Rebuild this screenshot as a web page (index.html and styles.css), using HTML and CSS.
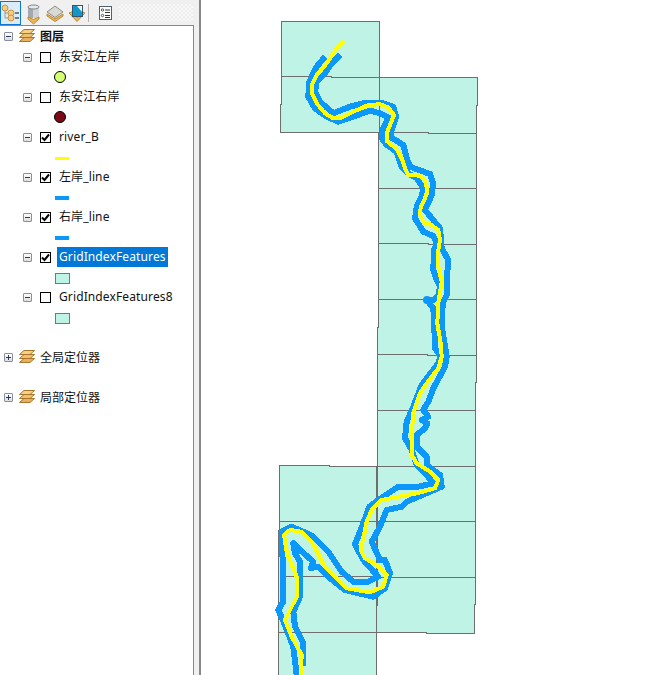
FILE: index.html
```html
<!DOCTYPE html>
<html lang="zh-CN">

<head>
    <meta charset="UTF-8">
    <meta name="viewport" content="width=device-width, initial-scale=1.0">
    <title>图层</title>

    <link rel="stylesheet" href="styles.css">
</head>

<body>
    <svg class="defs" width="0" height="0">
        <symbol id="stack" viewBox="0 0 16 14">
            <path d="M5 0.5H15.5L11 4.5H0.5Z" fill="#f5d088" stroke="#a8752a" />
            <path d="M5 4.5H15.5L11 8.5H0.5Z" fill="#efc070" stroke="#a8752a" />
            <path d="M5 8.5H15.5L11 12.5H0.5Z" fill="#e8b060" stroke="#a8752a" />
        </symbol>
        <symbol id="tick" viewBox="0 0 9 9">
            <polyline points="1 4.5 3.5 7 8 1.5" fill="none" stroke="#000" stroke-width="2" />
        </symbol>
    </svg>

    <div class="app">
        <aside class="toc">
            <div class="toolbar">
                <button class="tool active">
                    <svg viewBox="0 0 22 24" width="22" height="24">
                        <path d="M5 9V17H8M5 12H8" fill="none" stroke="#999" />
                        <path d="M15 12H19M15 17H19" fill="none" stroke="#555" stroke-width="1.5" />
                        <circle cx="5" cy="7" r="3" fill="#f3cd84" stroke="#c59540" />
                        <circle cx="11" cy="12" r="3" fill="#f3cd84" stroke="#c59540" />
                        <circle cx="11" cy="17" r="3" fill="#f3cd84" stroke="#c59540" />
                    </svg>
                </button>
                <button class="tool">
                    <svg viewBox="0 0 22 24" width="22" height="24">
                        <path d="M6 6V17H17V6Z" fill="#a4a9ad" />
                        <path d="M11 6V17H17V6Z" fill="#cfd3d6" />
                        <ellipse cx="11.5" cy="6" rx="5.5" ry="2" fill="#e6e9ec" stroke="#7d8286" />
                        <path d="M6 16L11.5 18.5L17 16V18L11.5 23L6 18Z" fill="#edb454" stroke="#c08a30" />
                    </svg>
                </button>
                <button class="tool">
                    <svg viewBox="0 0 22 24" width="22" height="24">
                        <path d="M3 15L11 20.500L19 15V13L11 18L3 13Z" fill="#edb454" stroke="#b98a3a" />
                        <path d="M11 5L19 11L11 16.500L3 11Z" fill="#d9d9d4" stroke="#8c8c86" />
                    </svg>
                </button>
                <button class="tool">
                    <svg viewBox="0 0 22 24" width="22" height="24">
                        <path d="M3 12L8 10V14L11 16.500L15 14V10L19 12L11 20.500Z" fill="#edb454" stroke="#b98a3a" />
                        <rect x="6.500" y="4.500" width="10" height="11" fill="#1296c8" stroke="#33566b" />
                        <path d="M11 5H16V11Z" fill="#f4f4f4" />
                    </svg>
                </button>
                <span class="tool-sep"></span>
                <button class="tool list-tool">
                    <svg viewBox="0 0 14 14" width="14" height="14">
                        <rect x="0.500" y="0.500" width="12" height="13" fill="#fff" stroke="#50606c" />
                        <circle cx="3.500" cy="4" r="1.200" fill="#fff" stroke="#333" stroke-width=".8" />
                        <circle cx="3.500" cy="9.500" r="1.200" fill="#fff" stroke="#333" stroke-width=".8" />
                        <path d="M6 4H11M6 6.500H11M6 9.500H11M6 11.500H11" stroke="#333" />
                    </svg>
                </button>
                <span class="grip"></span>
            </div>

            <div class="tree">
                <div class="row group-row">
                    <span class="toggle minus"></span>
                    <svg class="stack-icon"><use href="#stack" /></svg>
                    <span class="group-name bold">图层</span>
                </div>

                <div class="row">
                    <span class="toggle minus"></span>
                    <span class="check"></span>
                    <span class="name">东安江左岸</span>
                </div>
                <div class="row symbol"><span class="sym-point lime"></span></div>

                <div class="row">
                    <span class="toggle minus"></span>
                    <span class="check"></span>
                    <span class="name">东安江右岸</span>
                </div>
                <div class="row symbol"><span class="sym-point maroon"></span></div>

                <div class="row">
                    <span class="toggle minus"></span>
                    <span class="check"><svg width="9" height="9"><use href="#tick" /></svg></span>
                    <span class="name">river_B</span>
                </div>
                <div class="row symbol"><span class="sym-line yellow"></span></div>

                <div class="row">
                    <span class="toggle minus"></span>
                    <span class="check"><svg width="9" height="9"><use href="#tick" /></svg></span>
                    <span class="name">左岸_line</span>
                </div>
                <div class="row symbol"><span class="sym-line blue"></span></div>

                <div class="row">
                    <span class="toggle minus"></span>
                    <span class="check"><svg width="9" height="9"><use href="#tick" /></svg></span>
                    <span class="name">右岸_line</span>
                </div>
                <div class="row symbol"><span class="sym-line blue"></span></div>

                <div class="row">
                    <span class="toggle minus"></span>
                    <span class="check"><svg width="9" height="9"><use href="#tick" /></svg></span>
                    <span class="name selected">GridIndexFeatures</span>
                </div>
                <div class="row symbol"><span class="sym-fill"></span></div>

                <div class="row">
                    <span class="toggle minus"></span>
                    <span class="check"></span>
                    <span class="name">GridIndexFeatures8</span>
                </div>
                <div class="row symbol"><span class="sym-fill"></span></div>

                <div class="row group-row spaced">
                    <span class="toggle plus"></span>
                    <svg class="stack-icon"><use href="#stack" /></svg>
                    <span class="group-name">全局定位器</span>
                </div>
                <div class="row group-row spaced">
                    <span class="toggle plus"></span>
                    <svg class="stack-icon"><use href="#stack" /></svg>
                    <span class="group-name">局部定位器</span>
                </div>
            </div>
        </aside>

        <main class="map">
            <svg viewBox="201 0 458 675" width="458" height="675">
                <!-- index grid sheets -->
                <g class="sheet">
                    <path d="M279.500 465.500H329V466.500H376.500V675H278.500V530H279.500Z" />
                    <path d="M378.500 77.500H477.500V105H476.500V382H475.500V604H474.500V633.500H426V632.500H376.500V605H377.500V327H378.500Z" />
                    <path d="M281.500 21.500H379.500V132.500H280.500V104H281.500Z" />
                </g>
                <g class="sheet-lines">
                    <path d="M281.500 76.500H331V77.500H378.500" />
                    <path d="M378.500 132.500H428V133.500H476.500" />
                    <path d="M378.500 188.500H476.500" />
                    <path d="M378.500 243.500H428V244.500H476.500" />
                    <path d="M378.500 299.500H476.500" />
                    <path d="M377.500 354.500H427V355.500H476.500" />
                    <path d="M377.500 410.500H475.500" />
                    <path d="M377.500 466.500H475.500" />
                    <path d="M279.500 521.500H475.500" />
                    <path d="M279.500 576.500H377.500V577.500H475.500" />
                    <path d="M278.500 632.500H376.500" />
                </g>

                <!-- left bank -->
                <polyline class="bank" points="325,56.700 316.700,66.700 309.300,81.700 308.300,96.700 315,108.300 326.700,116.700 338.300,121.700 348.300,118.300 370,110.700 380,113.300 388.300,117.300 383.300,128.300 381.700,138.300 386.700,145 396.700,151.700 401.700,166.700 408.300,173.300 416.700,178.300 423.300,188.300 421.700,196.700 416.700,206.700 415,218.300 423.300,231.700 433.300,236 436.700,243.300 434,250 433.300,270 436.700,280 440,286.700 438.300,295 433.300,300 427,300 433.300,308.300 434.300,326.700 435,348.300 440.700,356.700 438.300,363.300 421.700,385 413.300,406.700 406.700,421.700 405,438.300 411.700,450 416.700,465 426.700,475 433.300,483.300 418.300,486.700 398.300,486.700 378.300,500 369.300,506.700 363.300,523.300 355,544.300 363.300,560 378.300,576.700 368.300,581.700 353.300,581.700 341.700,571.700 328.300,551.700 313.300,536.700 303.300,531.700 291.700,526.700 281.700,531.700 283.300,581.700 283.300,601.700 278.300,610 285,625 293.300,646.700 296.700,675" />
                <!-- right bank -->
                <polyline class="bank" points="340,55 331.700,63.300 325,73.300 316.700,81.700 315,91.700 320,101.700 333.300,113.300 350,106.700 365,102.700 383.300,103.300 393.300,106.700 396,116.700 391.700,130 390,136.700 403.300,145 406.700,158.300 410,166.700 430,174 433.300,183.300 431.700,195 425,210 440,228.300 441.700,248.300 448.300,260 446.700,280 446.700,295 442.700,303.300 441.700,326.700 445,346.700 446.700,356.700 445,366.700 433.300,388.300 428.300,401.700 423.300,410 428.300,416.700 421.700,420 427.300,423.300 425,428.300 416.700,435 416.700,446.700 426.700,456.700 426.700,465 440,475 441.700,486.700 406.700,501.700 401.700,506.700 386.700,510 380,526.700 371.700,541.700 380,560 385,560 390,573.300 385,588.300 373.300,596.700 345,590 330,578.300 318.300,566.700 311,568 313.300,561.700 300,550 293.300,543.300 295,553.300 300,561.700 300,596.700 293.300,611.700 295,626.700 303.300,643.300 303.300,666" />
                <circle class="bank-blob" cx="427" cy="300" r="4" />
                <circle class="bank-blob" cx="294" cy="544" r="3" />
                <!-- river centre line -->
                <polyline class="river" points="344,40.700 336.700,48.300 326.700,63.300 316.700,75 311.700,85 311.700,93.300 316.700,103.300 325,113.300 333.300,118.300 340,118.300 353.300,111.700 368.300,105 380,104.300 388.300,107.300 394,115 390,125 386.700,133.300 386.700,141 396,148.300 401.700,158.300 405,168.300 408.300,175 420,175.700 425,180 427.300,190 425,198.300 420.700,206.700 420,215 424,222.700 430,224 438.300,230 440,240 438.300,250 438.300,266.700 441.700,281.700 438.300,303.300 437.300,323.300 440.700,343.300 441.700,356.700 438.300,368.300 426.700,383.300 420,393.300 413.300,413.300 411.700,433.300 411.700,455 416.700,463.300 430,471.700 438.300,480 435,488.300 416.700,493.300 398.300,496.700 381.700,500 371.700,510 366.700,521.700 363.300,538.300 360.700,550 365,558.300 376.700,565 386.700,575 383.300,586.700 370,592.300 346.700,588.300 336.700,578.300 325,566.700 311.700,541.700 301.700,531.700 290,530 284,535 286.700,551.700 296.700,576.700 296.700,596.700 285,620 291.700,636.700 301.700,655 300.700,675" />
            </svg>
        </main>
    </div>
</body>

</html>
```

FILE: styles.css
```css
body {
    margin: 0;
    height: 675px;
    overflow: hidden;
    background: #fff;
    font-family: "Noto Sans", "Noto Sans CJK SC", sans-serif;
    font-size: 12px;
    color: #111;
}

.defs {
    display: block;
}

.app {
    display: flex;
    height: 675px;
}

/* table of contents */
.toc {
    width: 199px;
    flex: none;
    display: flex;
    flex-direction: column;
    background: #f0f0f0;
    border-right: 2px solid #88888c;
}

.toolbar {
    height: 25px;
    flex: none;
    display: flex;
    align-items: center;
}

.tool {
    width: 22px;
    height: 24px;
    padding: 0;
    border: none;
    background: none;
    display: flex;
    align-items: center;
    justify-content: center;
}

.tool.active {
    box-sizing: border-box;
    width: 21px;
    margin-right: 1px;
    border: 1px solid #0a78d2;
    background: #dcebf8;
}

.tool.active svg {
    flex: none;
}

.tool-sep {
    width: 1px;
    height: 18px;
    margin: 0 6px 0 0;
    background: #b4b4b4;
}

.list-tool {
    width: 22px;
    margin-right: 2px;
}

.grip {
    flex: 1;
    height: 17px;
    margin-right: 6px;
    background: repeating-conic-gradient(#f8f8f8 0 25%, #eeeeee 0 50%) 0 0 / 4px 4px;
}

.tree {
    width: 193px;
    flex: 1;
    background: #fff;
    border-top: 1px solid #88888c;
    border-right: 1px solid #88888c;
}

.row {
    height: 20px;
    display: flex;
    align-items: center;
    padding-left: 23px;
    white-space: nowrap;
}

.group-row {
    padding-left: 4px;
}

.group-row:first-child {
    margin-bottom: 1px;
}

.spaced {
    margin-top: 20px;
}

.toggle {
    box-sizing: border-box;
    width: 9px;
    height: 9px;
    flex: none;
    display: grid;
    place-items: center;
    border: 1px solid #8a8f98;
    border-radius: 1px;
    background: linear-gradient(to bottom, #fff, #dcdcdc);
}

.toggle::before,
.toggle::after {
    content: "";
    grid-area: 1 / 1;
    background: #2a3a60;
}

.toggle::before {
    width: 5px;
    height: 1px;
}

.toggle.plus::after {
    width: 1px;
    height: 5px;
}

.stack-icon {
    width: 16px;
    height: 14px;
    margin: 0 5px 0 6px;
}

.group-name.bold {
    font-weight: bold;
}

.check {
    box-sizing: border-box;
    width: 11px;
    height: 11px;
    flex: none;
    margin: 0 6px 0 8px;
    display: flex;
    border: 1px solid #000;
    background: #fff;
}

.name {
    height: 20px;
    line-height: 20px;
    padding: 0 2px;
    letter-spacing: .12px;
}

.selected {
    background: #0078d7;
    color: #fff;
}

.symbol {
    padding-left: 54px;
}

.sym-point {
    box-sizing: border-box;
    width: 12px;
    height: 12px;
    border: 1px solid #000;
    border-radius: 50%;
}

.lime {
    background: #d3ff73;
}

.maroon {
    background: #7b0a14;
}

.sym-line {
    width: 14px;
    margin: 2px 0 0 1px;
}

.yellow {
    height: 3px;
    background: #ffff00;
}

.blue {
    height: 4px;
    background: #0c97fb;
}

.sym-fill {
    box-sizing: border-box;
    width: 15px;
    height: 11px;
    margin: 3px 0 0 1px;
    border: 1px solid #777;
    background: #bef3e6;
}

/* map canvas */
.map {
    flex: 1;
    min-width: 0;
    background: #fff;
}

.map svg {
    display: block;
}

.sheet path {
    fill: #bef3e6;
    stroke: #6e6e6e;
    stroke-width: 1;
    shape-rendering: crispEdges;
}

.sheet-lines path {
    fill: none;
    stroke: #6e6e6e;
    stroke-width: 1;
    shape-rendering: crispEdges;
}

.bank {
    fill: none;
    stroke: #0c97fb;
    stroke-width: 6;
    stroke-linejoin: round;
    shape-rendering: crispEdges;
}

.bank-blob {
    fill: #0c97fb;
}

.river {
    fill: none;
    stroke: #ffff00;
    stroke-width: 4;
    stroke-linejoin: round;
    shape-rendering: crispEdges;
}
```
